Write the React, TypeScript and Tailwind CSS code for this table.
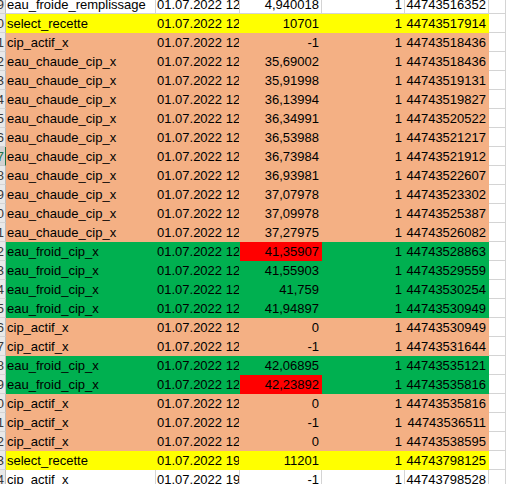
type Fill = "white" | "yellow" | "orange" | "green";

type Row = {
  name: string;
  date: string;
  value: string;
  id: string;
  fill: Fill;
  red?: boolean;
};

const rows: Row[] = [
  { name: "eau_froide_remplissage", date: "01.07.2022 12", value: "4,940018", id: "44743516352", fill: "white" },
  { name: "select_recette", date: "01.07.2022 12", value: "10701", id: "44743517914", fill: "yellow" },
  { name: "cip_actif_x", date: "01.07.2022 12", value: "-1", id: "44743518436", fill: "orange" },
  { name: "eau_chaude_cip_x", date: "01.07.2022 12", value: "35,69002", id: "44743518436", fill: "orange" },
  { name: "eau_chaude_cip_x", date: "01.07.2022 12", value: "35,91998", id: "44743519131", fill: "orange" },
  { name: "eau_chaude_cip_x", date: "01.07.2022 12", value: "36,13994", id: "44743519827", fill: "orange" },
  { name: "eau_chaude_cip_x", date: "01.07.2022 12", value: "36,34991", id: "44743520522", fill: "orange" },
  { name: "eau_chaude_cip_x", date: "01.07.2022 12", value: "36,53988", id: "44743521217", fill: "orange" },
  { name: "eau_chaude_cip_x", date: "01.07.2022 12", value: "36,73984", id: "44743521912", fill: "orange" },
  { name: "eau_chaude_cip_x", date: "01.07.2022 12", value: "36,93981", id: "44743522607", fill: "orange" },
  { name: "eau_chaude_cip_x", date: "01.07.2022 12", value: "37,07978", id: "44743523302", fill: "orange" },
  { name: "eau_chaude_cip_x", date: "01.07.2022 12", value: "37,09978", id: "44743525387", fill: "orange" },
  { name: "eau_chaude_cip_x", date: "01.07.2022 12", value: "37,27975", id: "44743526082", fill: "orange" },
  { name: "eau_froid_cip_x", date: "01.07.2022 12", value: "41,35907", id: "44743528863", fill: "green", red: true },
  { name: "eau_froid_cip_x", date: "01.07.2022 12", value: "41,55903", id: "44743529559", fill: "green" },
  { name: "eau_froid_cip_x", date: "01.07.2022 12", value: "41,759", id: "44743530254", fill: "green" },
  { name: "eau_froid_cip_x", date: "01.07.2022 12", value: "41,94897", id: "44743530949", fill: "green" },
  { name: "cip_actif_x", date: "01.07.2022 12", value: "0", id: "44743530949", fill: "orange" },
  { name: "cip_actif_x", date: "01.07.2022 12", value: "-1", id: "44743531644", fill: "orange" },
  { name: "eau_froid_cip_x", date: "01.07.2022 12", value: "42,06895", id: "44743535121", fill: "green" },
  { name: "eau_froid_cip_x", date: "01.07.2022 12", value: "42,23892", id: "44743535816", fill: "green", red: true },
  { name: "cip_actif_x", date: "01.07.2022 12", value: "0", id: "44743535816", fill: "orange" },
  { name: "cip_actif_x", date: "01.07.2022 12", value: "-1", id: "44743536511", fill: "orange" },
  { name: "cip_actif_x", date: "01.07.2022 12", value: "0", id: "44743538595", fill: "orange" },
  { name: "select_recette", date: "01.07.2022 19", value: "11201", id: "44743798125", fill: "yellow" },
  { name: "cip_actif_x", date: "01.07.2022 19", value: "-1", id: "44743798528", fill: "white" },
];

const fillClass: Record<Fill, string> = {
  white: "bg-white border-[#d4d4d4]",
  yellow: "bg-[#ffff00] border-[#ffff00]",
  orange: "bg-[#f4b084] border-[#f4b084]",
  green: "bg-[#00b050] border-[#00b050]",
};

function SheetRow({ row, num, selected }: { row: Row; num: number; selected: boolean }) {
  const cell = `h-[19px] shrink-0 overflow-hidden whitespace-nowrap border-r border-b pt-[2px] leading-[16px] ${fillClass[row.fill]}`;

  return (
    <div className="flex">
      {/* row header, mostly scrolled out of view */}
      <div
        className={`flex h-[19px] w-[6px] shrink-0 justify-end overflow-hidden border-r border-b pt-[2px] leading-[16px] ${
          selected
            ? "bg-[#d2d2d2] border-r-[#217346] border-b-[#c6c6c6] text-[#217346]"
            : "bg-[#e9e9e9] border-r-[#bdbdbd] border-b-[#d4d4d4] text-[#3b3b3b]"
        }`}
      >
        <span className="mr-[1px] shrink-0">{num}</span>
      </div>
      <div className={`${cell} w-[150px] pl-[1px]`}>{row.name}</div>
      <div className={`${cell} w-[84px] pl-[1px]`}>{row.date}</div>
      <div
        className={`${cell} w-[82px] pr-[2px] text-right ${
          row.red ? "!bg-[#ff0000] !border-[#ff0000]" : ""
        }`}
      >
        {row.value}
      </div>
      <div className={`${cell} w-[83px] pr-[2px] text-right`}>1</div>
      <div className={`${cell} w-[84px] pr-[2px] text-right`}>{row.id}</div>
      <div className="h-[19px] flex-1 border-r border-b border-[#d4d4d4] bg-white" />
    </div>
  );
}

export default function App() {
  return (
    <div className="h-[484px] w-[506px] overflow-hidden bg-white font-['Liberation_Sans',Arial,sans-serif] text-[13px] text-black">
      <div className="-mt-[5px]">
        {rows.map((row, i) => (
          <SheetRow key={i} row={row} num={1429 + i} selected={i === 8} />
        ))}
      </div>
    </div>
  );
}
